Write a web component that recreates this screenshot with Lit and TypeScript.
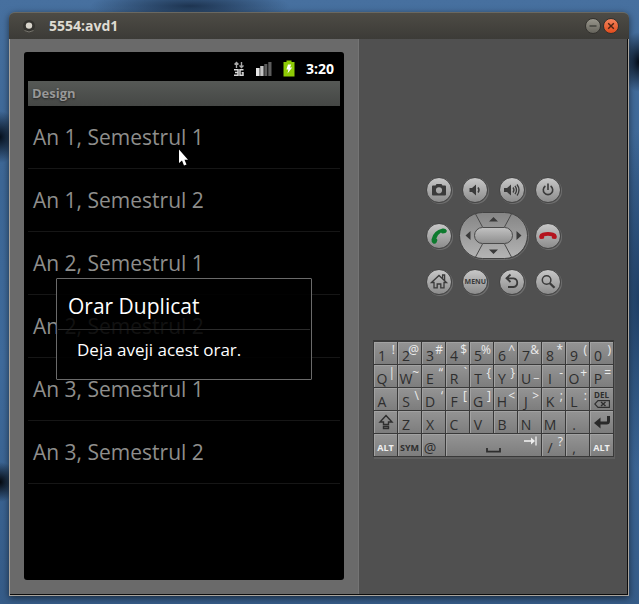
import { LitElement, html, css, svg, nothing, TemplateResult } from "lit";
import { customElement } from "lit/decorators.js";

interface Key {
  main?: string;
  alt?: string;
  label?: string;
  kind?: string;
  icon?: TemplateResult;
}

const shiftIcon = html`<svg class="glyph" width="16" height="16" viewBox="0 0 16 16" aria-hidden="true">
  <path d="M8 1.5 14 8H10.5V10.5H5.5V8H2Z M5.5 12.5H10.5V14.5H5.5Z" fill="none" stroke="#2e2e2e" stroke-width="1.4" />
</svg>`;

const delIcon = html`<svg class="glyph" width="16" height="8" viewBox="0 0 16 8" aria-hidden="true">
  <path d="M4 .6H15.4V7.4H4L.8 4Z" fill="none" stroke="#2e2e2e" stroke-width="1.1" />
  <path d="M7 2 11.5 6M11.5 2 7 6" stroke="#2e2e2e" stroke-width="1.4" />
</svg>`;

const enterIcon = html`<svg class="glyph" width="18" height="14" viewBox="0 0 18 14" aria-hidden="true">
  <path d="M15.5 1V6Q15.5 8 13.5 8H6" fill="none" stroke="#2a2a2a" stroke-width="3" />
  <path d="M1 8 7.5 2.5V13.5Z" fill="#2a2a2a" />
</svg>`;

const spaceIcon = html`<svg class="glyph bar" width="16" height="5" viewBox="0 0 16 5" aria-hidden="true">
  <path d="M1 0V3.6H14V0" fill="none" stroke="#2e2e2e" stroke-width="1.8" />
</svg>`;

const tabIcon = html`<svg class="tab" width="14" height="10" viewBox="0 0 14 10" aria-hidden="true">
  <path d="M0 5H8" stroke="#eee" stroke-width="1.6" />
  <path d="M7 1.5 11 5 7 8.5Z" fill="#eee" />
  <path d="M12 .5V9.5" stroke="#eee" stroke-width="1.3" />
</svg>`;

const pairs = (chars: string, alts: string[]): Key[] =>
  [...chars].map((main, i) => ({ main, alt: alts[i] }));

const KEYS: Key[] = [
  ...pairs("1234567890", ["!", "@", "#", "$", "%", "^", "&", "*", "(", ")"]),
  ...pairs("QWERTYUIOP", ["|", "~", "“", "`", "{", "}", "_", "-", "+", "="]),
  ...pairs("ASDFGHJKL", ["", "\\", "‘", "[", "]", "<", ">", ";", ":"]),
  { kind: "del", label: "Delete" },
  { label: "Shift", icon: shiftIcon },
  ...pairs("ZXCVBNM.", []),
  { label: "Enter", icon: enterIcon },
  { main: "ALT", kind: "word light" },
  { main: "SYM", kind: "word" },
  { main: "@" },
  { kind: "space", label: "Space" },
  { main: "/", alt: "?" },
  { main: "," },
  { main: "ALT", kind: "word light" },
];

@customElement("emulator-keyboard")
export class EmulatorKeyboard extends LitElement {
  static styles = css`
    :host {
      display: block;
    }
    .board {
      display: grid;
      grid-template-columns: repeat(10, minmax(0, 1fr));
      grid-auto-rows: 22px;
      gap: 1px;
      padding: 2px 1px 1px;
      background: #393939;
      box-shadow: 1px 2px 0 #5e5e5e;
    }
    .key {
      display: grid;
      min-width: 0;
      margin: 0;
      padding: 0;
      border: 0;
      background: linear-gradient(#949494, #7d7d7d);
      box-shadow: inset 1px 1px 0 #a2a2a2;
      color: #2e2e2e;
      font: 14px/16px "Open Sans", "Noto Sans", sans-serif;
    }
    .main,
    .alt,
    .glyph,
    .tab {
      grid-area: 1 / 1;
    }
    .main {
      place-self: end start;
      width: 16px;
      text-align: center;
    }
    .alt {
      place-self: start end;
      padding-right: 2px;
      color: #ececec;
      font-size: 12px;
    }
    .glyph {
      place-self: center;
    }
    .word .main {
      place-self: end center;
      width: auto;
      font-size: 9px;
      font-weight: 700;
    }
    .light .main {
      color: #f0f0f0;
    }
    .space {
      grid-column: span 4;
    }
    .bar {
      place-self: end center;
      margin-bottom: 3px;
    }
    .tab {
      place-self: start end;
      margin: 2px 3px;
    }
    .del {
      display: flex;
      flex-direction: column;
      align-items: center;
      justify-content: center;
      font-size: 8px;
      font-weight: 700;
      line-height: 10px;
    }
  `;

  private face(k: Key) {
    if (k.kind === "del") return html`<span>DEL</span>${delIcon}`;
    if (k.kind === "space") return html`${spaceIcon}${tabIcon}`;
    return html`${k.icon ?? nothing}
      ${k.main ? html`<span class="main">${k.main}</span>` : nothing}
      ${k.alt ? html`<span class="alt">${k.alt}</span>` : nothing}`;
  }

  render() {
    return html`<div class="board">
      ${KEYS.map(
        (k) => html`<button class="key ${k.kind ?? ""}" aria-label=${k.label ?? k.main ?? ""}>${this.face(k)}</button>`
      )}
    </div>`;
  }
}

const dark = "#3a3a3a";

const ICONS: Record<string, TemplateResult> = {
  Camera: svg`<path fill=${dark} fill-rule="evenodd" d="M6 9.5Q6 8.5 7 8.5H9.5L10.5 7H15.5L16.5 8.5H19Q20 8.5 20 9.5V17.5Q20 18.5 19 18.5H7Q6 18.5 6 17.5ZM13 10.2A3.1 3.1 0 1 0 13 16.4A3.1 3.1 0 1 0 13 10.2Z"/>`,
  "Volume down": svg`<path fill=${dark} d="M7.5 11H10L14 7.5V18.5L10 15H7.5Z"/><path d="M16 10.5Q18 13 16 15.5" fill="none" stroke=${dark} stroke-width="1.5"/>`,
  "Volume up": svg`<path fill=${dark} d="M5 11H8L12 7.5V18.5L8 15H5Z"/><path d="M14 10.5Q16 13 14 15.5M16 8.8Q19 13 16 17.2M18 7.5Q22 13 18 18.5" fill="none" stroke=${dark} stroke-width="1.3"/>`,
  Power: svg`<path d="M10.4 9A4.7 4.7 0 1 0 15.6 9M13 6.5V13" fill="none" stroke=${dark} stroke-width="1.6"/>`,
  Call: svg`<path fill="#0d7a2e" d="M16.6 5.6Q19.6 5.2 20.8 7.4Q21 9.2 19.4 9.9L16.8 10.6Q15.6 10.4 15 9.6Q11.4 11.8 10.3 15.4Q11.4 16.2 11.4 17.2L10.4 19.8Q9.4 21.2 7.2 20.6Q5.2 19.2 5.5 16.4Q7.4 7.6 16.6 5.6Z"/>`,
  "End call": svg`<path fill="#b4141e" d="M4.2 13.2Q4.6 10.6 7.6 9.8Q13 8.4 18.4 9.8Q21.4 10.6 21.8 13.2Q22 15.6 20.4 16L17.6 15.8Q16.6 15.4 16.8 13.2Q13 12.4 9.2 13.2Q9.4 15.4 8.4 15.8L5.6 16Q4 15.6 4.2 13.2Z"/>`,
  Home: svg`<path d="M5.5 13.5 13 6.5 20.5 13.5H18V18.8H14.8V15H11.2V18.8H8V13.5ZM16.6 9.4V6H18.6V11.4" fill="none" stroke=${dark} stroke-width="1.3"/>`,
  Back: svg`<path d="M11.5 5.5 7.5 9.3 11.5 13M8 9.3H14.5A4.4 4.4 0 0 1 14.5 18H9" fill="none" stroke=${dark} stroke-width="1.8"/>`,
  Search: svg`<circle cx="11.6" cy="11" r="4.3" fill="none" stroke=${dark} stroke-width="1.5"/><path d="M14.8 14.2 19.5 18.8" stroke=${dark} stroke-width="2.3"/>`,
};

@customElement("emulator-controls")
export class EmulatorControls extends LitElement {
  static styles = css`
    :host {
      display: flex;
      flex-direction: column;
      gap: 9px;
      width: 135px;
    }
    .row {
      display: flex;
      align-items: center;
      justify-content: space-between;
    }
    .round {
      display: grid;
      place-content: center;
      width: 26px;
      height: 26px;
      margin: 0;
      padding: 0;
      border: 1px solid #454545;
      border-radius: 50%;
      background: linear-gradient(#c8c8c8, #8c8c8c);
      box-shadow: 1px 1px 0 #6e6e6e;
      color: #3a3a3a;
      font: 700 7px/10px "Open Sans", "Noto Sans", sans-serif;
    }
    .icon,
    .pad {
      display: block;
    }
  `;

  private round(name: string) {
    return html`<button class="round" aria-label=${name}>
      ${name === "Menu"
        ? html`<span>MENU</span>`
        : html`<svg class="icon" width="26" height="26" viewBox="0 0 26 26" aria-hidden="true">${ICONS[name]}</svg>`}
    </button>`;
  }

  render() {
    return html`
      <div class="row">${["Camera", "Volume down", "Volume up", "Power"].map((n) => this.round(n))}</div>
      <div class="row">
        ${this.round("Call")}
        <svg class="pad" width="70" height="48" viewBox="0 0 70 48" role="group" aria-label="Directional pad">
          <defs>
            <linearGradient id="ring" x1="0" y1="0" x2="0" y2="1">
              <stop offset="0" stop-color="#858585" />
              <stop offset="1" stop-color="#b4b4b4" />
            </linearGradient>
            <linearGradient id="pill" x1="0" y1="0" x2="0" y2="1">
              <stop offset="0" stop-color="#c2c2c2" />
              <stop offset="1" stop-color="#8e8e8e" />
            </linearGradient>
          </defs>
          <rect x="1.5" y="1.5" width="68" height="46" rx="23" fill="none" stroke="#6e6e6e" />
          <rect x=".5" y=".5" width="68" height="46" rx="23" fill="url(#ring)" stroke="#424242" />
          <path d="M16 1 23.5 15M53 1 45.5 15M16 46 23.5 32M53 46 45.5 32" stroke="#4a4a4a" fill="none" />
          <rect x="15.5" y="15.5" width="38" height="16" rx="8" fill="url(#pill)" stroke="#4a4a4a" />
          <path fill="#3a3a3a" d="M30 9.5 34.5 5 39 9.5ZM30 37.5 34.5 42 39 37.5ZM11.5 19V28L6.5 23.5ZM57.5 19V28L62.5 23.5Z" />
        </svg>
        ${this.round("End call")}
      </div>
      <div class="row">${["Home", "Menu", "Back", "Search"].map((n) => this.round(n))}</div>
    `;
  }
}

const ITEMS = [1, 2, 3].flatMap((y) => [1, 2].map((s) => `An ${y}, Semestrul ${s}`));

@customElement("phone-screen")
export class PhoneScreen extends LitElement {
  static styles = css`
    :host {
      position: relative;
      display: flex;
      flex-direction: column;
      padding: 0 4px;
      border-radius: 3px;
      background: #000;
      font-family: "Open Sans", "Noto Sans", sans-serif;
    }
    .status {
      display: flex;
      align-items: center;
      justify-content: flex-end;
      gap: 11px;
      height: 25px;
      padding: 4px 6px 0 0;
      color: #fff;
      font-size: 14px;
      line-height: 20px;
      font-weight: 700;
    }
    .title {
      margin: 0;
      padding: 3px 4px 4px;
      background: linear-gradient(#565956, #454745);
      color: #989898;
      font-size: 13px;
      line-height: 18px;
      font-weight: 700;
      text-shadow: 0 1px 2px #222;
    }
    .list {
      margin: 0;
      padding: 0;
      list-style: none;
    }
    .item {
      padding: 16px 5px;
      border-bottom: 1px solid #161616;
      color: #8e8e8c;
      font-size: 21px;
      line-height: 30px;
    }
    .overlay {
      position: absolute;
      inset: 26px 0 0;
      display: grid;
      place-items: center;
    }
    .dialog {
      box-sizing: border-box;
      width: 80%;
      border: 1px solid #6a6a6a;
      border-radius: 1px;
      background: rgba(0, 0, 0, 0.88);
      color: #fff;
    }
    .heading {
      margin: 0 1px;
      padding: 12px 10px 8px;
      border-bottom: 1px solid #2c2c2c;
      font-size: 21px;
      line-height: 30px;
      font-weight: 400;
    }
    .message {
      margin: 0;
      padding: 8px 20px 17px;
      font-size: 17px;
      line-height: 24px;
    }
    .pointer {
      position: absolute;
      left: 154px;
      top: 97px;
    }
  `;

  render() {
    return html`
      <div class="status">
        <svg width="12" height="16" viewBox="0 0 12 16" aria-label="3G">
          <path d="M3.5 7V1.8M1.5 3.5 3.5 1.5 5.5 3.5M8.5 1V6M6.5 4.5 8.5 6.5 10.5 4.5" fill="none" stroke="#a8a8a8" stroke-width="1.4" />
          <path d="M1 8.8H5V14.2H1M2 11.5H5M10.5 8.8H7V14.2H10V11.8H8.6" fill="none" stroke="#d8d8d8" stroke-width="1.5" />
        </svg>
        <svg width="16" height="16" viewBox="0 0 16 16" aria-label="Signal">
          <path fill="#e6e6e6" d="M0 7H3.6V15H0Z" />
          <path fill="#c4c4c4" d="M4.2 5H7.6V15H4.2Z" />
          <path fill="#5c5c5c" d="M8.3 3H11.3V15H8.3ZM12.3 1H15.5V15H12.3Z" />
        </svg>
        <svg width="12" height="17" viewBox="0 0 12 17" aria-label="Battery charging">
          <path fill="#8ecb05" d="M.5 2H3.5V.5H8.5V2H11.5V16.5H.5Z" />
          <path fill="#fff" d="M5 4.5H8.2L7 7.5H9.2L4.5 13.5 5.4 9.4H3.4Z" />
        </svg>
        <span class="clock">3:20</span>
      </div>
      <h2 class="title">Design</h2>
      <ul class="list">
        ${ITEMS.map((t) => html`<li class="item">${t}</li>`)}
      </ul>
      <div class="overlay">
        <div class="dialog" role="dialog" aria-labelledby="heading">
          <h3 class="heading" id="heading">Orar Duplicat</h3>
          <p class="message">Deja aveji acest orar.</p>
        </div>
      </div>
      <svg class="pointer" width="11" height="18" viewBox="0 0 11 18" aria-hidden="true">
        <path d="M1 .5V14L4 11.5 6 16.5 8.5 15.5 6.5 10.8H10Z" fill="#fff" />
      </svg>
    `;
  }
}

@customElement("app-root")
export class AppRoot extends LitElement {
  static styles = css`
    :host {
      box-sizing: border-box;
      display: flex;
      min-height: 100vh;
      padding: 12px 10px 8px 9px;
      background:
        radial-gradient(ellipse 100px 16px at 190px 6px, rgba(20, 38, 62, 0.8), transparent),
        radial-gradient(ellipse 20px 26px at 0 137px, #06101c, transparent),
        radial-gradient(ellipse 18px 20px at 0 482px, #04080e, transparent),
        radial-gradient(ellipse 18px 30px at 100% 62px, #040c18, transparent),
        radial-gradient(ellipse 24px 170px at 100% 300px, rgba(24, 52, 86, 0.8), transparent),
        linear-gradient(#47709f, #3d6796 30%, #3f6b9c 60%, #365c88);
      font-family: "Open Sans", "Noto Sans", sans-serif;
    }
    .window {
      flex: 1;
      display: flex;
      flex-direction: column;
      border-radius: 6px 6px 0 0;
      box-shadow: 0 2px 7px rgba(0, 0, 0, 0.55);
    }
    .bar {
      display: flex;
      align-items: center;
      height: 26px;
      padding: 0 10px 0 13px;
      border-top: 1px solid #6a6861;
      border-radius: 6px 6px 0 0;
      background: linear-gradient(#4d4b45, #3c3b37);
    }
    .name {
      flex: 1;
      margin: 0 0 0 13px;
      color: #dfdbd2;
      font-family: "Open Sans", "Noto Sans", sans-serif;
      font-size: 14px;
      line-height: 20px;
      font-weight: 700;
    }
    .controls {
      display: flex;
      gap: 2px;
    }
    .control {
      display: grid;
      place-items: center;
      width: 16px;
      height: 16px;
      padding: 0;
      border: 1px solid #33322e;
      border-radius: 50%;
      background: linear-gradient(#98968c, #66645c);
    }
    .close {
      background: linear-gradient(#f4845c, #e24c1c);
    }
    .body {
      flex: 1;
      display: grid;
      grid-template-columns: 348fr 270fr;
      border: 1px solid #a9a49c;
      border-top: 0;
    }
    .left {
      display: flex;
      padding: 13px 14px 15px;
      background: #6a6a6a;
      box-shadow: inset 0 -1px 0 #0c0c0c;
    }
    .screen {
      flex: 1;
    }
    .right {
      display: flex;
      flex-direction: column;
      align-items: center;
      gap: 45px;
      padding: 138px 13px 0 15px;
      border: solid #0c0c0c;
      border-width: 0 1px 1px 0;
      background: #505050;
      box-shadow: inset 1px 0 0 #747474;
    }
    .keys {
      align-self: stretch;
    }
  `;

  render() {
    return html`
      <main class="window">
        <header class="bar">
          <svg width="14" height="14" viewBox="0 0 14 14" aria-hidden="true">
            <circle cx="7" cy="7" r="6" fill="#34332f" />
            <path d="M2.5 11.5Q7 14.5 11.5 11.5" fill="none" stroke="#76746c" />
            <circle cx="7" cy="6.6" r="3.2" fill="#d8d4cb" />
          </svg>
          <h1 class="name">5554:avd1</h1>
          <div class="controls">
            <button class="control" aria-label="Minimize">
              <svg width="8" height="8" viewBox="0 0 8 8"><path d="M.5 4H7.5" stroke="#35342f" stroke-width="1.2" /></svg>
            </button>
            <button class="control close" aria-label="Close">
              <svg width="8" height="8" viewBox="0 0 8 8"><path d="M1.2 1.2 6.8 6.8M6.8 1.2 1.2 6.8" stroke="#4a2314" stroke-width="1.4" /></svg>
            </button>
          </div>
        </header>
        <div class="body">
          <section class="left"><phone-screen class="screen"></phone-screen></section>
          <section class="right">
            <emulator-controls></emulator-controls>
            <emulator-keyboard class="keys"></emulator-keyboard>
          </section>
        </div>
      </main>
    `;
  }
}
